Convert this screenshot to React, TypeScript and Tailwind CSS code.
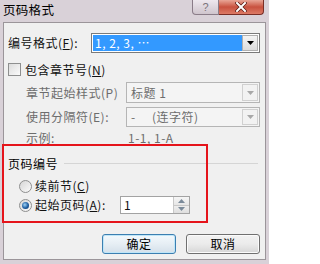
import React from "react";

function Arrow({ color = "#000" }: { color?: string }) {
  return (
    <svg width="7" height="4" viewBox="0 0 7 4">
      <path d="M0 0 H7 L3.5 4 Z" fill={color} />
    </svg>
  );
}

function Radio({ checked }: { checked?: boolean }) {
  return (
    <div className="w-[13px] h-[13px] rounded-full border border-[#8e8f8f] bg-gradient-to-br from-[#d6d6d6] to-[#fbfbfb] flex items-center justify-center shrink-0">
      {checked && (
        <div className="w-[7px] h-[7px] rounded-full bg-[radial-gradient(circle_at_40%_40%,#9fd3f7,#1d5da0_55%,#0b2f5e)]" />
      )}
    </div>
  );
}

export default function App() {
  return (
    <div className="w-[269px] h-[264px] bg-[#d9d1d8] flex flex-col overflow-hidden relative font-['Noto_Sans_CJK_SC','Liberation_Sans',sans-serif] text-[12px] leading-[14px] text-[#111]">
      {/* Title bar */}
      <div className="h-[22px] flex items-start shrink-0">
        <span className="ml-[3px] mt-[2px] text-[12.5px] leading-[16px] tracking-[0.3px] text-black">页码格式</span>
        <div className="ml-auto mr-[5px] flex">
          <div className="w-[27px] h-[15px] rounded-bl-[4px] border border-t-0 border-[#8a7c88] bg-gradient-to-b from-[#eee8ee] to-[#cfc5cd] flex items-center justify-center text-[11px] leading-[12px] text-[#7a727a] font-['Liberation_Sans',sans-serif]">
            ?
          </div>
          <div className="w-[45px] h-[15px] rounded-br-[4px] border border-l-0 border-t-0 border-[#7a2e26] bg-gradient-to-b from-[#e8a597] via-[#c8513f] to-[#dd7a66] flex items-center justify-center">
            <svg width="12" height="10" viewBox="0 0 12 10">
              <path d="M2 1 L10 9 M10 1 L2 9" stroke="#5a1a14" strokeWidth="3.4" strokeLinecap="square" />
              <path d="M2 1 L10 9 M10 1 L2 9" stroke="#ffffff" strokeWidth="2" strokeLinecap="square" />
            </svg>
          </div>
        </div>
      </div>

      {/* Client */}
      <div className="ml-[3px] w-[263px] h-[238px] border border-[#9b959a] bg-[#f0f0f0] flex flex-col pl-[4px] pr-[5px]">
        {/* Row 1 */}
        <div className="mt-[10px] h-[20px] flex items-center">
          <div className="w-[83px] tracking-[0.5px]">
            编号格式(<u>F</u>):
          </div>
          <div className="flex-1 h-[20px] border border-[#7a7a7a] bg-white flex p-[1px]">
            <div className="flex-1 bg-[#3399ff] text-white pl-[2px] flex items-center tracking-[0.5px]">1, 2, 3, …</div>
            <div className="w-[16px] border border-[#b0b0b0] bg-gradient-to-b from-[#f4f4f4] to-[#dcdcdc] flex items-center justify-center">
              <Arrow />
            </div>
          </div>
        </div>

        {/* Row 2 */}
        <div className="mt-[10px] h-[13px] flex items-center">
          <div className="w-[13px] h-[13px] border border-[#8e8f8f] bg-gradient-to-br from-[#dcdcdc] to-[#fbfbfb] shrink-0" />
          <span className="ml-[4px] tracking-[0.5px]">
            包含章节号(<u>N</u>)
          </span>
        </div>

        {/* Row 3 */}
        <div className="mt-[6px] h-[21px] flex items-center text-[#6d6d6d]">
          <div className="ml-[18px] w-[100px] tracking-[0.5px]">章节起始样式(P)</div>
          <div className="flex-1 h-[21px] border border-[#b5b5b5] bg-[#f4f4f4] flex p-[1px]">
            <div className="flex-1 pl-[3px] flex items-center tracking-[0.5px]">标题 1</div>
            <div className="w-[16px] border border-[#d0d0d0] bg-[#f2f2f2] flex items-center justify-center">
              <Arrow color="#a8a8a8" />
            </div>
          </div>
        </div>

        {/* Row 4 */}
        <div className="mt-[4px] h-[20px] flex items-center text-[#6d6d6d]">
          <div className="ml-[18px] w-[100px] tracking-[0.5px]">使用分隔符(E):</div>
          <div className="flex-1 h-[20px] border border-[#b5b5b5] bg-[#f4f4f4] flex p-[1px]">
            <div className="flex-1 pl-[3px] flex items-center tracking-[0.5px]">
              <span className="w-[21px]">-</span>
              <span>(连字符)</span>
            </div>
            <div className="w-[16px] border border-[#d0d0d0] bg-[#f2f2f2] flex items-center justify-center">
              <Arrow color="#a8a8a8" />
            </div>
          </div>
        </div>

        {/* Row 5 */}
        <div className="mt-[4px] h-[14px] flex items-center text-[#6d6d6d]">
          <div className="ml-[18px] w-[102px] tracking-[0.5px]">示例:</div>
          <div className="tracking-[0.5px]">1-1, 1-A</div>
        </div>

        {/* Group heading */}
        <div className="mt-[11px] h-[15px] flex items-center">
          <span className="tracking-[0.5px] text-black">页码编号</span>
          <div className="flex-1 h-px bg-[#d5d5d5] ml-[6px] mr-[2px]" />
        </div>

        {/* Radio 1 */}
        <div className="mt-[8px] h-[14px] flex items-center">
          <div className="ml-[11px]">
            <Radio />
          </div>
          <span className="ml-[3px] tracking-[0.5px]">
            续前节(<u>C</u>)
          </span>
        </div>

        {/* Radio 2 */}
        <div className="mt-[3px] h-[18px] flex items-center">
          <div className="ml-[11px]">
            <Radio checked />
          </div>
          <span className="ml-[3px] w-[85px] tracking-[0.5px]">
            起始页码(<u>A</u>):
          </span>
          <div className="w-[70px] h-[18px] border border-[#a3a3a3] bg-white flex">
            <div className="flex-1 pl-[3px] flex items-center">1</div>
            <div className="w-[16px] flex flex-col border-l border-[#c8c8c8]">
              <div className="flex-1 bg-gradient-to-b from-[#f6f6f6] to-[#e6e6e6] border-b border-[#c8c8c8] flex items-center justify-center">
                <svg width="7" height="4" viewBox="0 0 7 4">
                  <path d="M0 4 H7 L3.5 0 Z" fill="#7a8a9a" />
                </svg>
              </div>
              <div className="flex-1 bg-gradient-to-b from-[#eeeeee] to-[#dedede] flex items-center justify-center">
                <Arrow color="#7a8a9a" />
              </div>
            </div>
          </div>
        </div>

        {/* Buttons */}
        <div className="mt-[20px] h-[20px] flex justify-end gap-[10px]">
          <div className="w-[74px] h-[20px] rounded-[3px] border border-[#3c7fb1] bg-gradient-to-b from-[#f3f9fd] via-[#e6eef4] to-[#d4e0ea] shadow-[inset_0_0_0_1px_#bfe6f8] flex items-center justify-center tracking-[0.5px] text-black">
            确定
          </div>
          <div className="w-[74px] h-[20px] rounded-[3px] border border-[#707070] bg-gradient-to-b from-[#f2f2f2] via-[#ebebeb] to-[#d6d6d6] shadow-[inset_0_0_0_1px_#fbfbfb] flex items-center justify-center tracking-[0.5px] text-black">
            取消
          </div>
        </div>
      </div>

      {/* Red annotation rectangle */}
      <div className="absolute left-[2px] top-[144px] w-[206px] h-[79px] border-2 border-[#e5141b] pointer-events-none" />
    </div>
  );
}
